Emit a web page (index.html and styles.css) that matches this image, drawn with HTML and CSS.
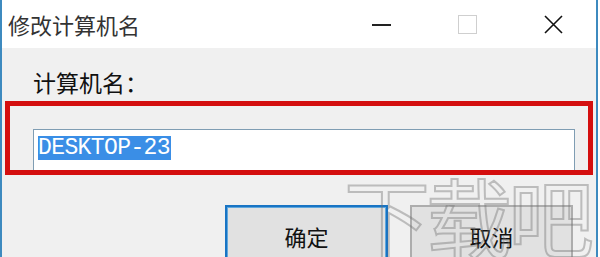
FILE: index.html
```html
<!DOCTYPE html>
<html>
<head>
	<title>修改计算机名</title>
	<link rel="stylesheet" href="styles.css">
</head>
<body>

	<div class="window">
		<div class="titlebar">
			<div class="title">修改计算机名</div>
			<div class="caption">
				<div class="cap-btn"><span class="ico-min"></span></div>
				<div class="cap-btn"><span class="ico-max"></span></div>
				<div class="cap-btn">
					<svg width="19" height="19" viewBox="0 0 19 19"><path d="M1 1 L18 18 M18 1 L1 18" stroke="#111" stroke-width="1.6"/></svg>
				</div>
			</div>
		</div>

		<div class="content">
			<div class="label">计算机名：</div>
			<div class="field"><span class="sel">DESKTOP-23</span></div>

			<div class="buttons">
				<button class="btn btn-ok">确定</button>
				<button class="btn">取消</button>
			</div>

			<div class="mark">下载吧</div>
			<div class="redbox"></div>
		</div>
	</div>

</body>
</html>
```

FILE: styles.css
```css
	body{
		margin: 0;
		background: #fff;
		font-family: "Noto Sans CJK SC", "Noto Sans", sans-serif;
	}

	.window{
		width: 594px;
		height: 257px;
		border-left: 2px solid #3d8abf;
		border-right: 2px solid #3d8abf;
		overflow: hidden;
		display: flex;
		flex-direction: column;
	}

	.titlebar{
		height: 48px;
		background: #fff;
		display: flex;
		align-items: center;
		justify-content: space-between;
	}

	.title{
		padding-left: 6px;
		font-size: 22px;
		color: #333;
	}

	.caption{
		display: flex;
		height: 48px;
	}

	.cap-btn{
		width: 86px;
		display: flex;
		align-items: center;
		justify-content: center;
	}

	.ico-min{
		width: 19px;
		height: 2px;
		background: #222;
		margin-top: 2px;
	}

	.ico-max{
		width: 17px;
		height: 17px;
		border: 1.5px solid #cfcfcf;
	}

	.content{
		flex: 1;
		position: relative;
		background: #f0f0f0;
		padding: 19px 21px 0 31px;
	}

	.label{
		font-size: 23px;
		line-height: 30px;
		color: #111;
	}

	.field{
		margin-top: 32px;
		background: #fff;
		border: 1px solid #7f9db3;
		padding: 5px 0 0 4px;
		box-sizing: border-box;
		height: 44px;
	}

	.sel{
		display: inline-block;
		background: #3a8ee6;
		color: #fff;
		font-family: "Liberation Mono", monospace;
		font-size: 23px;
		letter-spacing: -0.6px;
		line-height: 24px;
		padding-right: 1px;
	}

	.buttons{
		margin-top: 32px;
		margin-left: 192px;
		display: flex;
		gap: 22px;
	}

	.btn{
		width: 163px;
		height: 62px;
		background: #e1e1e1;
		border: 2px solid #adadad;
		font-family: "Noto Sans CJK SC", sans-serif;
		font-size: 22px;
		color: #111;
		padding: 0;
	}

	.btn-ok{
		border-color: #1874c4;
		box-shadow: inset 0 0 0 1px #5fa7dd;
	}

	.mark{
		position: absolute;
		left: 342px;
		top: 112px;
		font-size: 86px;
		line-height: 110px;
		letter-spacing: -4px;
		color: transparent;
		-webkit-text-stroke: 2px rgba(110,110,110,.4);
		pointer-events: none;
	}

	.redbox{
		position: absolute;
		left: 3px;
		top: 53px;
		width: 578px;
		height: 64px;
		border: 5px solid #d40f0f;
	}
```
